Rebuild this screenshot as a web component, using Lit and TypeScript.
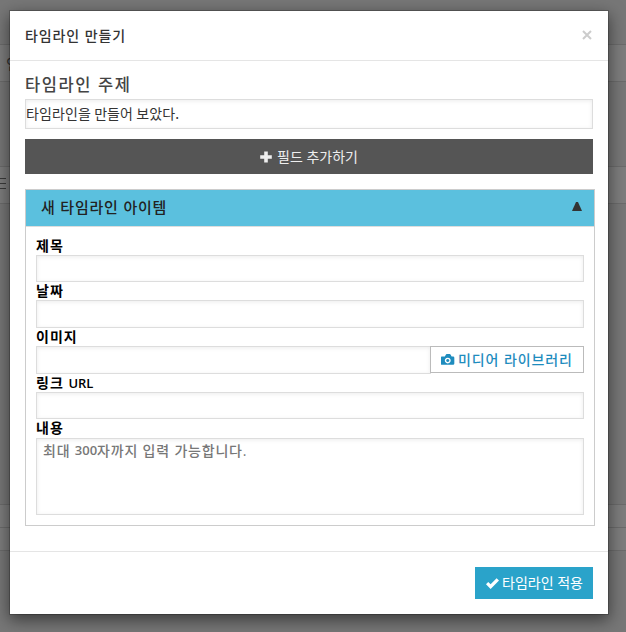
import { LitElement, html, css, svg } from "lit";
import { customElement } from "lit/decorators.js";

const plus = svg`<path d="M4.2 0.5h3.6v3.7h4v3.6h-4v3.7h-3.6v-3.7h-4v-3.6h4z"/>`;
const camera = svg`<path fill-rule="evenodd" d="M1 2.5h3l1-1.8q.3-.7 1-.7h3q.7 0 1 .7l1 1.8h1.500q1.300 0 1.300 1.300v6q0 1.300-1.300 1.300h-11.500q-1.300 0-1.300-1.300v-6q0-1.300 1.300-1.300zM7 3.700a3 3 0 1 0 .01 0zM7 5.100a1.600 1.600 0 1 1-.01 0z"/>`;
const check = svg`<path d="M0 6.300l2.300-2.300 2.500 2.500 6.200-6.300 2.500 2.300-8.700 8.800z"/>`;

@customElement("app-root")
export class AppRoot extends LitElement {
  static styles = css`
    :host { display: block; position: relative; width: 626px; height: 632px; overflow: hidden;
      background: #777; font-family: "Open Sans", "Noto Sans CJK KR", sans-serif; }
    * { box-sizing: border-box; }
    .page { position: absolute; inset: 0; }
    .strip { position: absolute; left: 0; right: 0; background: #7d7d7d; border: solid #6b6b6b; border-width: 1px 0; }
    .s1 { top: 44px; height: 38px; }
    .s2 { top: 166px; height: 38px; }
    .s3 { top: 504px; height: 24px; }
    .s4 { top: 527px; height: 24px; }
    .bars { position: absolute; left: 0; top: 178px; width: 6px; height: 11px;
      background: repeating-linear-gradient(#3a3a3a 0 1px, transparent 1px 5px); }
    .under { position: absolute; left: 6px; top: 52px; font-size: 16px; line-height: 24px; color: #333; }
    .modal { position: relative; width: 600px; height: 605px; left: 9px; top: 10px; background: #fff;
      border: 1px solid rgba(0,0,0,.2); background-clip: padding-box; box-shadow: 0 5px 15px rgba(0,0,0,.5);
      display: flex; flex-direction: column; }
    .head { height: 50px; flex: none; border-bottom: 1px solid #e5e5e5; padding: 0 16px 2px 15px; display: flex; align-items: center; justify-content: space-between; }
    .title { font-size: 14px; letter-spacing: .9px; font-weight: 500; color: #333; }
    .close { width: 10px; height: 10px; stroke: #ccc; stroke-width: 2; }
    .body { height: 490px; flex: none; padding: 13px 15px 0; }
    .label { font-size: 16.500px; line-height: 22px; letter-spacing: 1.600px; font-weight: 500; color: #444; height: 25px; }
    .input { display: flex; align-items: center; border: 1px solid #ddd; background: #fff; box-shadow: inset 0 1px 4px rgba(0,0,0,.08); }
    .topic { height: 30px; padding-bottom: 2px; font-size: 14px; letter-spacing: .1px; color: #333; font-weight: 400; font-family: "Noto Sans CJK KR", sans-serif; }
    .add { margin-top: 10px; height: 35px; background: #555; color: #eee; display: flex; align-items: center; justify-content: center;
      gap: 5px; font-size: 14px; letter-spacing: 0; font-weight: 400; }
    .add span, .apply span { padding-bottom: 2px; }
    .icon { display: block; fill: currentColor; flex: none; }
    .panel { margin-top: 15px; width: 570px; height: 337px; border: 1px solid #ccc; }
    .bar { height: 37px; background: #5bc0de; border-bottom: 1px solid #ddd; display: flex; align-items: center; justify-content: space-between;
      padding: 0 12px 3px 15px; font-size: 15px; letter-spacing: .8px; font-weight: 500; color: #222; }
    .tri { fill: #333; display: block; }
    .fields { padding: 10px; display: flex; flex-direction: column; }
    .name { height: 18px; line-height: 18px; font-size: 14px; letter-spacing: 1px; font-weight: 700; color: #000; }
    .latin { font-size: 13px; font-weight: 600; letter-spacing: 0; }
    .box { height: 28px; }
    .b27 { height: 27px; }
    .row { display: flex; height: 28px; }
    .grow { width: 395px; }
    .media { margin-left: -1px; width: 154px; height: 27px; border: 1px solid #bbb; color: #1e8cbe; background: #fff; display: flex; align-items: center;
      padding-left: 10px; gap: 3px; font-size: 14px; letter-spacing: .9px; font-weight: 500; white-space: nowrap; }
    .media span { padding-bottom: 2px; }
    .area { margin-top: 1px; height: 77px; align-items: flex-start; padding: 1px 6px; font-size: 14px; line-height: 21px; color: #777; letter-spacing: .8px; font-weight: 500; white-space: pre; }
    .foot { flex: 1; border-top: 1px solid #e5e5e5; padding: 15px; display: flex; justify-content: flex-end; }
    .apply { width: 118px; height: 32px; background: #2aa3ca; color: #fff; display: flex; align-items: center; padding-left: 11px; gap: 3px;
      font-size: 14px; letter-spacing: 0; font-weight: 400; white-space: nowrap; }
  `;

  render() {
    return html`
      <div class="page">
        <div class="strip s1"></div><div class="strip s2"></div><div class="strip s3"></div><div class="strip s4"></div>
        <div class="bars"></div><div class="under">인</div>
      </div>
      <div class="modal">
        <div class="head">
          <span class="title">타임라인 만들기</span>
          <svg class="close" viewBox="0 0 10 10"><path d="M1 1l8 8M9 1l-8 8"/></svg>
        </div>
        <div class="body">
          <div class="label">타임라인 주제</div>
          <div class="input topic">타임라인을 만들어 보았다.</div>
          <div class="add"><svg class="icon" width="12" height="12" viewBox="0 0 12 12">${plus}</svg><span>필드 추가하기</span></div>
          <div class="panel">
            <div class="bar"><span>새 타임라인 아이템</span><svg class="tri" width="10" height="9" viewBox="0 0 10 9"><path d="M4 0h2l4 9h-10z"/></svg></div>
            <div class="fields">
              <div class="name">제목</div><div class="input b27"></div>
              <div class="name">날짜</div><div class="input box"></div>
              <div class="name">이미지</div>
              <div class="row"><div class="input box grow"></div>
                <div class="media"><svg class="icon" width="14" height="11" viewBox="0 0 14.500 11.200">${camera}</svg><span>미디어 라이브러리</span></div></div>
              <div class="name">링크 <span class="latin">URL</span></div><div class="input b27"></div>
              <div class="name">내용</div><div class="input area">최대 <span class="latin">300</span>자까지 입력 가능합니다.</div>
            </div>
          </div>
        </div>
        <div class="foot"><div class="apply"><svg class="icon" width="13" height="11" viewBox="0 0 13.500 11.300">${check}</svg><span>타임라인 적용</span></div></div>
      </div>
    `;
  }
}
